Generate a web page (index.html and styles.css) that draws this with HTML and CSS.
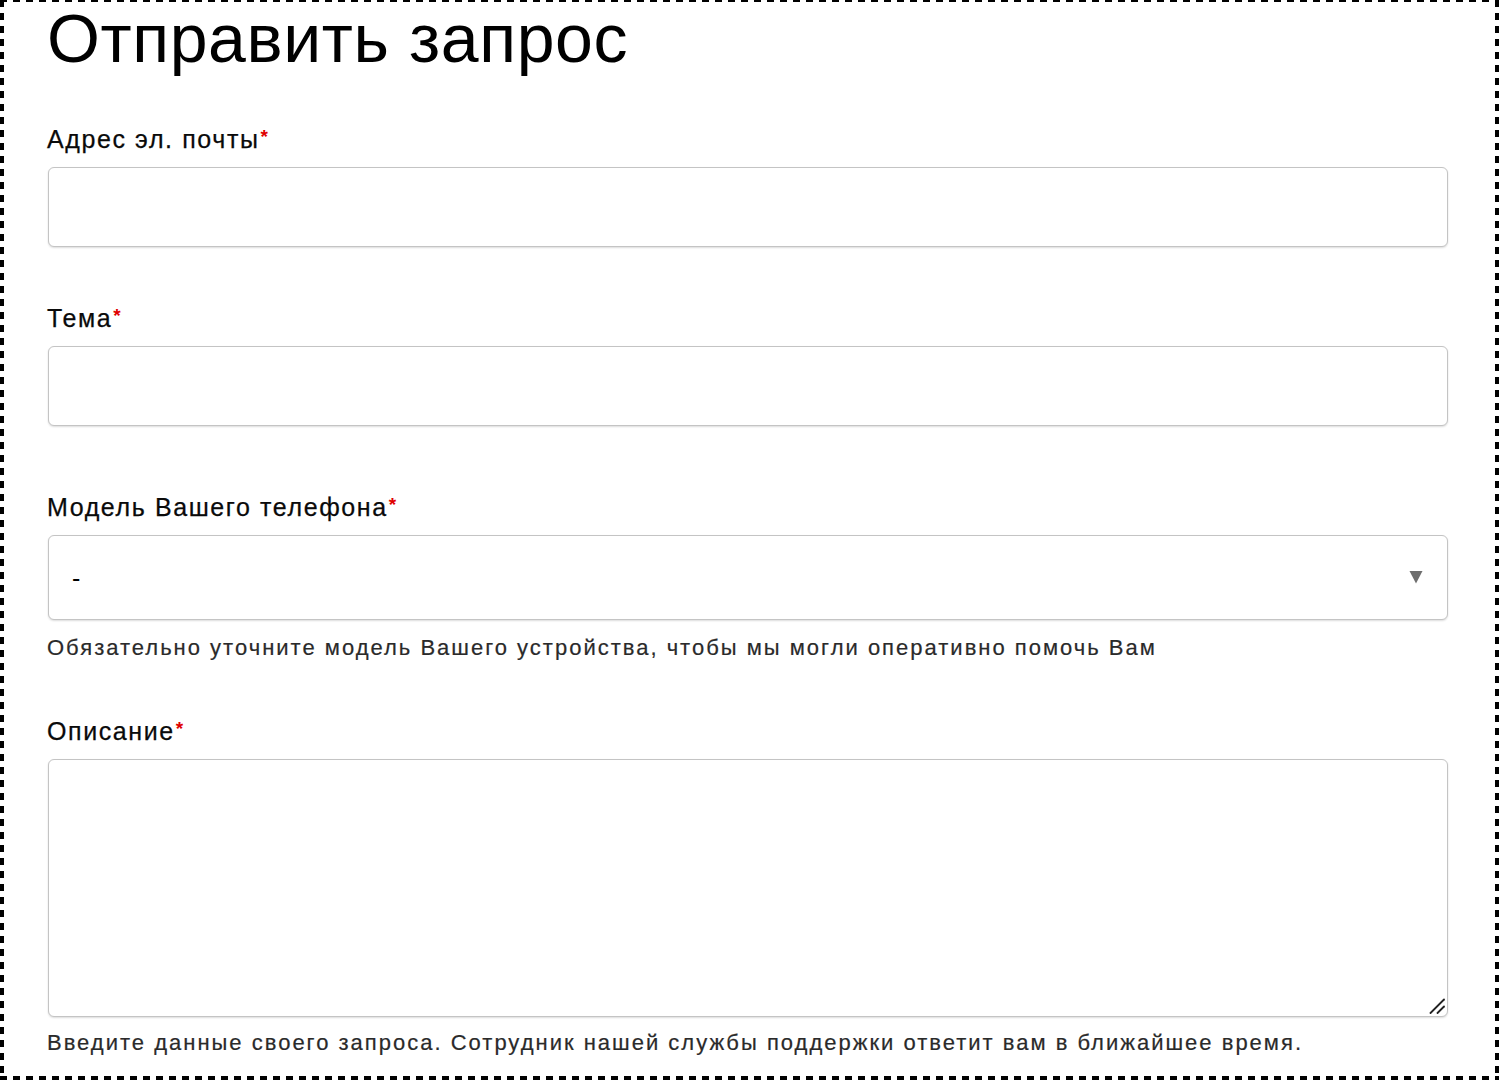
FILE: index.html
```html
<!DOCTYPE html>
<html lang="ru">
<head>
<meta charset="utf-8">
<title>Отправить запрос</title>
<link rel="stylesheet" href="styles.css">
</head>
<body>
<div class="frame">
  <h1 class="title">Отправить запрос</h1>
  <form class="form">
    <div class="field field-email">
      <label class="label" for="email">Адрес эл. почты<span class="req">*</span></label>
      <input class="control input" id="email" type="email">
    </div>
    <div class="field field-subject">
      <label class="label" for="subject">Тема<span class="req">*</span></label>
      <input class="control input" id="subject" type="text">
    </div>
    <div class="field field-model">
      <label class="label" for="model">Модель Вашего телефона<span class="req">*</span></label>
      <div class="select-wrap">
        <select class="control select" id="model">
          <option>-</option>
        </select>
        <svg class="select-arrow" width="14" height="14" viewBox="0 0 14 14" aria-hidden="true">
          <polygon points="0.5,1 13.5,1 7,13.5" fill="#6e6e6e"/>
        </svg>
      </div>
      <p class="hint">Обязательно уточните модель Вашего устройства, чтобы мы могли оперативно помочь Вам</p>
    </div>
    <div class="field field-desc">
      <label class="label" for="desc">Описание<span class="req">*</span></label>
      <div class="textarea-wrap">
        <textarea class="control textarea" id="desc"></textarea>
        <svg class="resize-grip" width="16" height="16" viewBox="0 0 16 16" aria-hidden="true">
          <line x1="1.5" y1="15" x2="15" y2="1.5" stroke="#222" stroke-width="1.8" stroke-linecap="round"/>
          <line x1="8.5" y1="15" x2="15" y2="8.5" stroke="#222" stroke-width="1.8" stroke-linecap="round"/>
        </svg>
      </div>
      <p class="hint">Введите данные своего запроса. Сотрудник нашей службы поддержки ответит вам в ближайшее время.</p>
    </div>
  </form>
</div>
</body>
</html>
```
FILE: styles.css
```css
html, body {
  margin: 0;
  padding: 0;
  background: #fff;
}

.frame {
  width: 1499px;
  height: 1080px;
  box-sizing: border-box;
  padding: 4px 51px 0 47px;
  font-family: "Liberation Sans", Arial, sans-serif;
  color: #000;
  background:
    repeating-linear-gradient(90deg, #000 0 7px, transparent 7px 13px) left top / 100% 2px no-repeat,
    repeating-linear-gradient(90deg, #000 0 7px, transparent 7px 13px) left bottom / 100% 4px no-repeat,
    repeating-linear-gradient(180deg, #000 0 7px, transparent 7px 13px) left top / 4px 100% no-repeat,
    repeating-linear-gradient(180deg, #000 0 7px, transparent 7px 13px) right top / 4px 100% no-repeat,
    #fff;
}

.title {
  margin: 0;
  font-size: 68px;
  line-height: 68px;
  font-weight: 400;
  letter-spacing: 0.6px;
  color: #000;
}

.form {
  display: flex;
  flex-direction: column;
}

.field {
  display: flex;
  flex-direction: column;
  align-items: flex-start;
}

.field-email { margin-top: 52px; }
.field-subject { margin-top: 56px; }
.field-model { margin-top: 66px; }
.field-desc { margin-top: 56px; }

.label {
  display: block;
  font-size: 25px;
  line-height: 30px;
  letter-spacing: 1.6px;
  color: #0a0a0a;
  -webkit-text-stroke: 0.25px #0a0a0a;
  margin-bottom: 13px;
}

.req {
  color: #e00000;
  -webkit-text-stroke: 0;
  font-size: 19px;
  font-weight: 700;
  line-height: 1;
  vertical-align: 5px;
  margin-left: 1px;
  letter-spacing: 0;
}

.control {
  display: block;
  box-sizing: border-box;
  width: 1400px;
  margin: 0 0 0 1px;
  border: 1px solid #c4c4c4;
  border-radius: 6px;
  background: #fff;
  box-shadow: 0 1px 2px rgba(0, 0, 0, 0.14);
  font-family: "Liberation Sans", Arial, sans-serif;
  outline: none;
}

.input {
  height: 80px;
  padding: 0 23px;
  font-size: 25px;
}

.select-wrap,
.textarea-wrap {
  position: relative;
}

.select {
  height: 85px;
  padding: 0 23px;
  font-size: 25px;
  color: #000;
  -webkit-appearance: none;
  appearance: none;
}

.select-arrow {
  position: absolute;
  right: 25px;
  top: 35px;
}

.textarea {
  height: 258px;
  padding: 12px 23px;
  font-size: 25px;
  resize: none;
}

.resize-grip {
  position: absolute;
  right: 3px;
  bottom: 3px;
  pointer-events: none;
}

.hint {
  margin: 16px 0 0;
  font-size: 22px;
  line-height: 24px;
  letter-spacing: 2px;
  color: #2a2a2a;
  -webkit-text-stroke: 0.2px #2a2a2a;
}

.field-desc .hint {
  margin-top: 14px;
}
```
